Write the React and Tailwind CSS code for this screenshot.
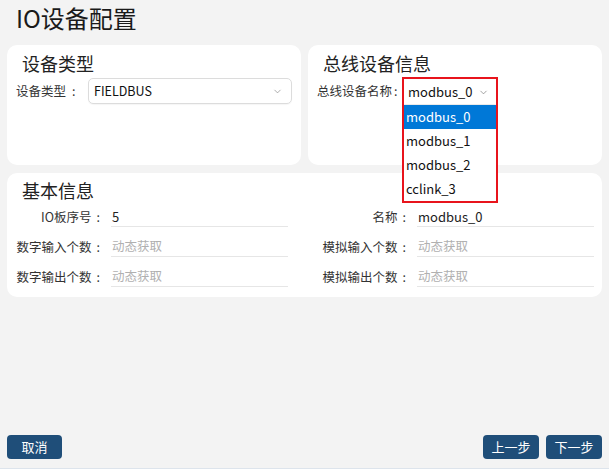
import React from 'react'
import { ChevronDown } from 'lucide-react'

const Field = ({ label, value, placeholder }) => (
    <div className="flex items-center h-[30px]">
        <div className="w-[85px] shrink-0 text-right text-[12.5px] text-[#333]">
            {label}
            <span className="ml-[5px]">:</span>
        </div>
        <div className="ml-[11px] flex-1 h-[20px] border-b border-[#e6e6e6] flex items-center pl-px text-[13px]">
            {value ? (
                <span className="text-[#222]">{value}</span>
            ) : (
                <span className="text-[#b0b0b0] text-[12.5px]">{placeholder}</span>
            )}
        </div>
    </div>
)

export default function App() {
    const options = ['modbus_0', 'modbus_1', 'modbus_2', 'cclink_3']

    return (
        <div className="w-full h-[469px] bg-[#f3f3f3] flex flex-col border-b border-[#dde4ec] font-['Noto_Sans_CJK_SC','Noto_Sans',sans-serif] text-[#222]">
            <div className="h-[45px] pl-[16px] pt-[6px] text-[24px] leading-[24px] text-[#1a1a1a]">IO设备配置</div>

            <div className="px-[7px] grid grid-cols-2 gap-[7px] h-[120px]">
                <div className="bg-white rounded-[10px]">
                    <div className="pt-[9px] h-[33px] pl-[15px] text-[18px] leading-[18px]">设备类型</div>
                    <div className="flex items-center h-[26px] pl-[9px]">
                        <div className="w-[72px] text-[12.5px] text-[#333]">
                            设备类型<span className="ml-[6px]">:</span>
                        </div>
                        <div className="w-[204px] h-[26px] border border-[#dcdcdc] rounded-[5px] flex items-center justify-between pl-[5px] pr-[8px] shadow-[0_1px_1px_rgba(0,0,0,0.04)]">
                            <span className="text-[12.5px] text-[#111]">FIELDBUS</span>
                            <ChevronDown size={11} strokeWidth={1.5} className="text-[#888]" />
                        </div>
                    </div>
                </div>

                <div className="bg-white rounded-[10px]">
                    <div className="pt-[9px] h-[33px] pl-[15px] text-[18px] leading-[18px]">总线设备信息</div>
                    <div className="flex items-center h-[26px] pl-[9px]">
                        <div className="w-[87px] text-[12.5px] text-[#333]">
                            总线设备名称<span className="ml-[2px]">:</span>
                        </div>
                        <div className="relative z-10 mt-[2px]">
                            <div className="w-[92px] h-[24px] bg-white flex items-center justify-between pl-[4px] pr-[7px] shadow-[0_1px_2px_rgba(0,0,0,0.12)]">
                                <span className="text-[13px] text-[#111]">modbus_0</span>
                                <ChevronDown size={11} strokeWidth={1.5} className="text-[#777]" />
                            </div>
                            <div className="absolute left-0 top-[25px] w-[92px] bg-white">
                                {options.map((o, i) => (
                                    <div
                                        key={o}
                                        className={`h-[24px] flex items-center pl-[2px] text-[13px] ${
                                            i === 0 ? 'bg-[#0078d7] text-white' : 'text-[#111]'
                                        }`}
                                    >
                                        {o}
                                    </div>
                                ))}
                            </div>
                            <div className="absolute -left-[2px] -top-[3px] w-[96px] h-[126px] border-2 border-[#e8141c] pointer-events-none" />
                        </div>
                    </div>
                </div>
            </div>

            <div className="mx-[7px] mt-[8px] h-[124px] bg-white rounded-[10px]">
                <div className="pt-[8px] h-[29px] pl-[15px] text-[18px] leading-[18px]">基本信息</div>
                <div className="grid grid-cols-2 gap-x-[33px] px-[8px]">
                    <div>
                        <Field label="IO板序号" value="5" />
                        <Field label="数字输入个数" placeholder="动态获取" />
                        <Field label="数字输出个数" placeholder="动态获取" />
                    </div>
                    <div>
                        <Field label="名称" value="modbus_0" />
                        <Field label="模拟输入个数" placeholder="动态获取" />
                        <Field label="模拟输出个数" placeholder="动态获取" />
                    </div>
                </div>
            </div>

            <div className="mt-auto px-[7px] pb-[9px] flex justify-between">
                <button className="w-[55px] h-[24px] rounded-[4px] bg-[#1f4e79] text-white text-[13px]">取消</button>
                <div className="flex gap-[7px]">
                    <button className="w-[56px] h-[24px] rounded-[4px] bg-[#1f4e79] text-white text-[13px]">上一步</button>
                    <button className="w-[56px] h-[24px] rounded-[4px] bg-[#1f4e79] text-white text-[13px]">下一步</button>
                </div>
            </div>
        </div>
    )
}
